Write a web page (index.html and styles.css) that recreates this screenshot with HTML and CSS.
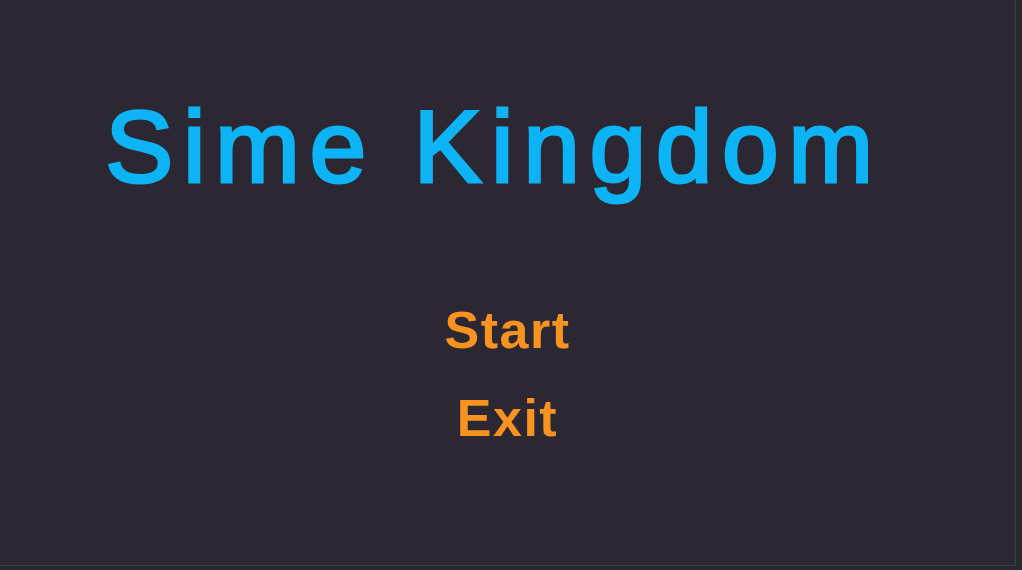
FILE: index.html
```html
<!DOCTYPE html>
<html lang="en">
<head>
<meta charset="utf-8">
<title>Sime Kingdom</title>
<link rel="stylesheet" href="styles.css">
</head>
<body>
<main class="screen">
  <h1 class="title">Sime Kingdom</h1>
  <nav class="menu">
    <button class="menu-item" type="button">Start</button>
    <button class="menu-item" type="button">Exit</button>
  </nav>
</main>
</body>
</html>
```

FILE: styles.css
```css
html, body {
  margin: 0;
  padding: 0;
  height: 100%;
}

body {
  background: #26292b;
  font-family: "Liberation Sans", Arial, sans-serif;
  overflow: hidden;
}

.screen {
  box-sizing: border-box;
  width: 1016px;
  height: 566px;
  background: #2c2833;
  border-right: 1px solid #3c3d46;
  border-bottom: 1px solid #3c3d46;
  display: flex;
  flex-direction: column;
  align-items: center;
  padding-top: 96px;
}

/* heavy-ish title: regular face thickened with an outline */
.title {
  margin: 0 27px 0 0;
  font-size: 102px;
  line-height: 1;
  font-weight: 400;
  letter-spacing: 9.5px;
  color: #0db4f5;
  -webkit-text-stroke: 3px #0db4f5;
}

.menu {
  display: flex;
  flex-direction: column;
  align-items: center;
  gap: 36px;
  margin-top: 106px;
}

.menu-item {
  background: none;
  border: 0;
  padding: 0;
  font-family: inherit;
  font-size: 52px;
  line-height: 1;
  font-weight: 700;
  letter-spacing: 1.5px;
  color: #f7931e;
  cursor: pointer;
}
```
